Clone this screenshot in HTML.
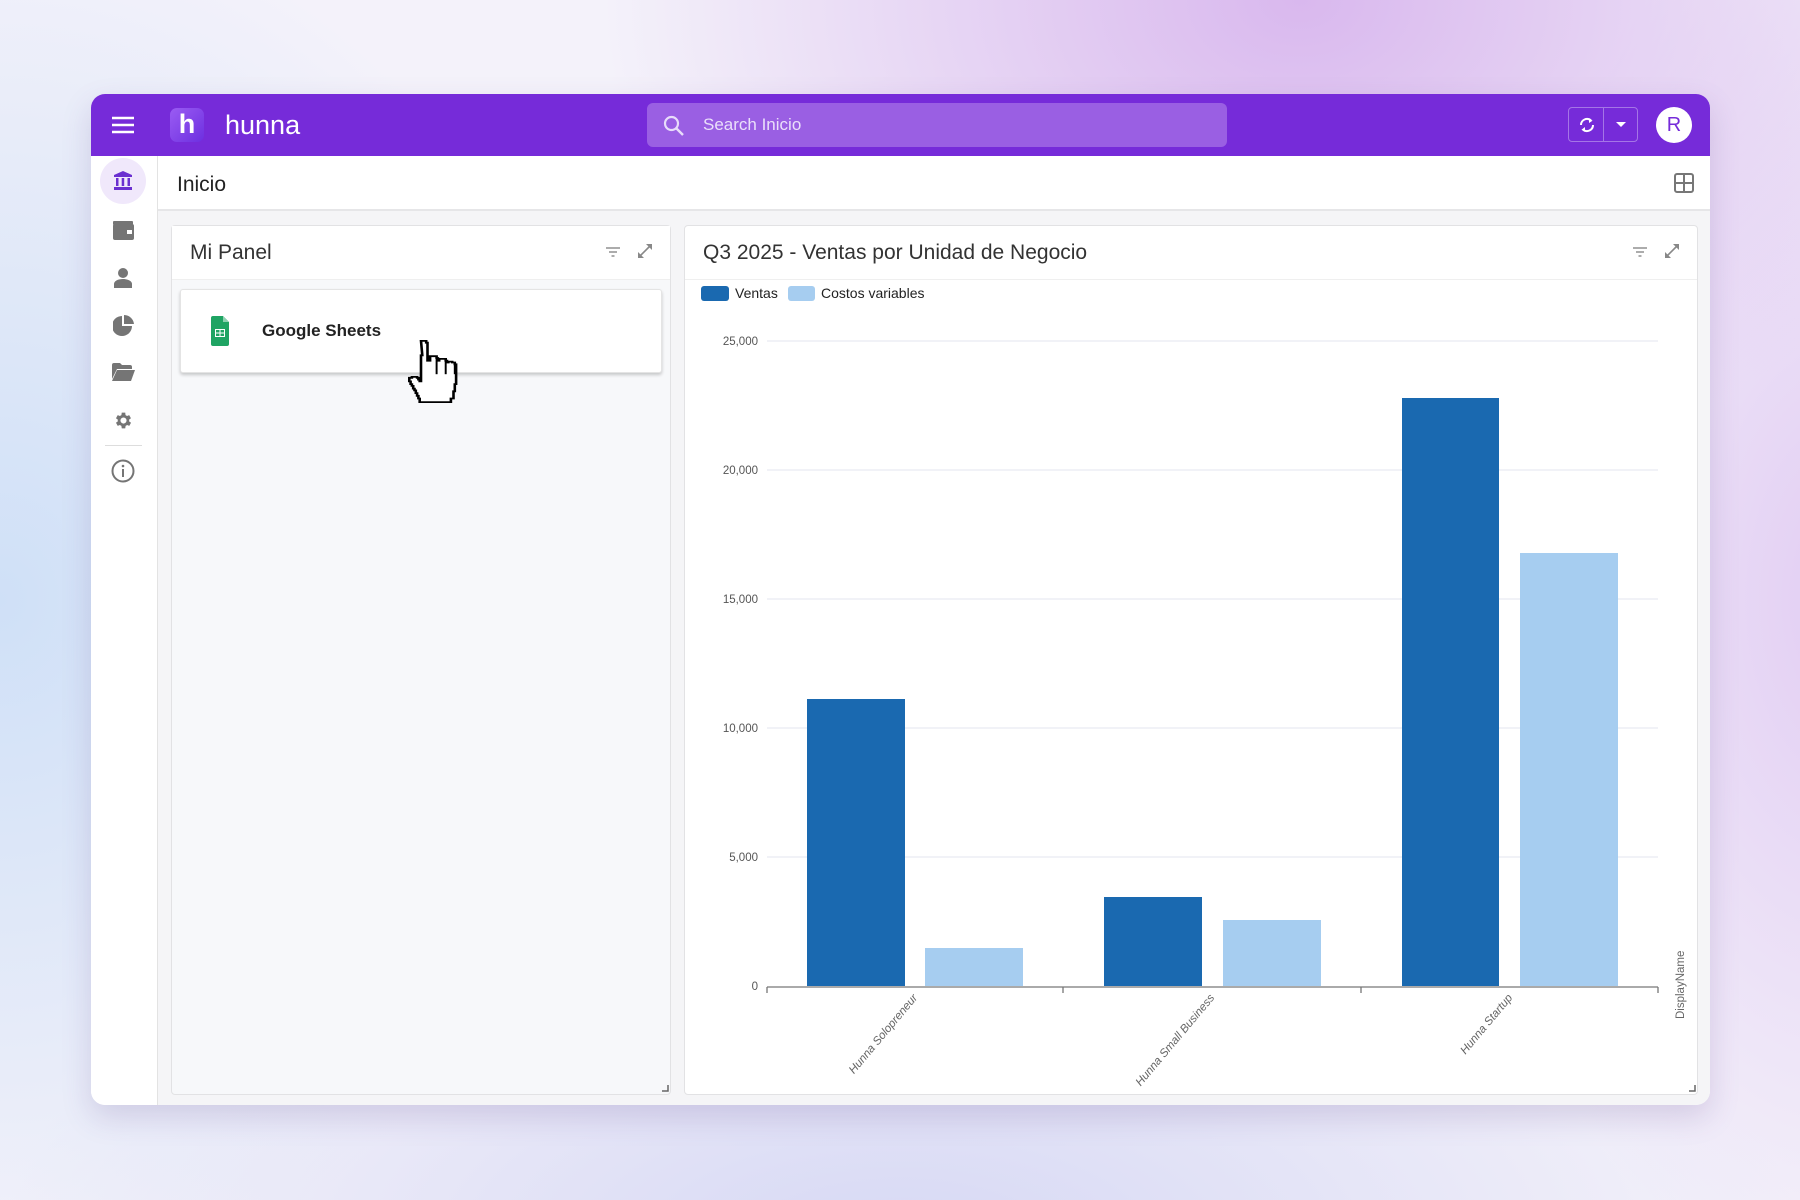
<!DOCTYPE html>
<html><head><meta charset="utf-8"><style>
*{margin:0;padding:0;box-sizing:border-box}
body{width:1800px;height:1200px;overflow:hidden;font-family:"Liberation Sans",Arial,sans-serif;
background:radial-gradient(ellipse 700px 500px at 1300px 0px,#d9b8ee 0%,rgba(217,184,238,0) 100%),
radial-gradient(ellipse 600px 700px at 0px 600px,#cfe0f7 0%,rgba(207,224,247,0) 100%),
radial-gradient(ellipse 900px 400px at 900px 1250px,#d6d8f4 0%,rgba(214,216,244,0) 100%),
radial-gradient(ellipse 400px 700px at 1850px 600px,#e2cdf3 0%,rgba(226,205,243,0) 100%),#f4f2fa;position:relative}
.win{position:absolute;left:91px;top:94px;width:1619px;height:1011px;background:#fff;border-radius:14px;overflow:hidden;box-shadow:0 12px 30px rgba(90,60,140,.18)}
.hdr{position:absolute;left:0;top:0;width:100%;height:62px;background:#762bd9}
.abs{position:absolute}
.side{position:absolute;left:0;top:62px;width:67px;bottom:0;border-right:1px solid #e3e3e3;background:#fff}
.topbar{position:absolute;left:67px;top:62px;right:0;height:55px;border-bottom:2px solid #e6e6e8;background:#fff}
.content{position:absolute;left:67px;top:117px;right:0;bottom:0;background:#f5f5f7}
.panel{position:absolute;background:#fff;border:1px solid #e2e2e4;border-radius:4px}
.ph{position:absolute;left:0;top:0;right:0;height:54px;border-bottom:1px solid #efefef}
</style></head><body>
<div class="win">
 <div class="hdr">
  <svg class="abs" style="left:21px;top:22px" width="22" height="18"><g stroke="#fff" stroke-width="2.4"><line x1="0" y1="2" x2="22" y2="2"/><line x1="0" y1="9" x2="22" y2="9"/><line x1="0" y1="16" x2="22" y2="16"/></g></svg>
  <div class="abs" style="left:79px;top:14px;width:34px;height:34px;border-radius:7px;background:linear-gradient(135deg,#9a5cf3,#6d2fe0);color:#fff;font-weight:bold;font-size:27px;text-align:center;line-height:33px">h</div>
  <div class="abs" style="left:134px;top:14px;color:#fff;font-size:27px;line-height:34px">hunna</div>
  <div class="abs" style="left:556px;top:9px;width:580px;height:44px;border-radius:6px;background:#9a5fe3">
   <svg class="abs" style="left:16px;top:12px" width="22" height="22"><circle cx="8.5" cy="8.5" r="6.5" fill="none" stroke="#e8dcfa" stroke-width="2.2"/><line x1="13.5" y1="13.5" x2="20" y2="20" stroke="#e8dcfa" stroke-width="2.4"/></svg>
   <div class="abs" style="left:56px;top:12px;color:#eadffa;font-size:17px">Search Inicio</div>
  </div>
  <div class="abs" style="left:1477px;top:13px;width:70px;height:35px;border:1px solid rgba(255,255,255,.35);border-radius:4px">
   <div class="abs" style="left:34px;top:0;width:1px;height:33px;background:rgba(255,255,255,.35)"></div>
   <svg class="abs" style="left:8px;top:7px" width="20" height="20" viewBox="0 0 20 20"><path d="M4 10a6 6 0 0 1 10-4.5M16 10a6 6 0 0 1-10 4.5" fill="none" stroke="#fff" stroke-width="2"/><path d="M12 3l3.5 2.8L12 8z M8 12l-3.5 2.8L8 17z" fill="#fff"/></svg>
   <svg class="abs" style="left:47px;top:14px" width="10" height="6"><path d="M0 0h10L5 5z" fill="#fff"/></svg>
  </div>
  <div class="abs" style="left:1565px;top:13px;width:36px;height:36px;border-radius:50%;background:#fff;color:#762bd9;font-size:20px;text-align:center;line-height:36px">R</div>
 </div>
 <div class="side">
  <div class="abs" style="left:9px;top:2px;width:46px;height:46px;border-radius:50%;background:#f0e8fb"></div>
  <svg class="abs" style="left:22px;top:15px" width="20" height="20" viewBox="0 0 20 20" fill="#6a2fd0"><path d="M10 0L19 4v2H1V4z"/><rect x="3" y="7" width="2.5" height="8"/><rect x="8.7" y="7" width="2.5" height="8"/><rect x="14.5" y="7" width="2.5" height="8"/><rect x="1" y="16" width="18" height="3"/></svg>
  <svg class="abs" style="left:22px;top:65px" width="21" height="19" viewBox="0 0 21 19"><rect x="0" y="0" width="20" height="4" rx="1" fill="#757575"/><rect x="0" y="3" width="21" height="16" rx="2" fill="#757575"/><rect x="14" y="9" width="5" height="4" fill="#fff"/></svg>
  <svg class="abs" style="left:23px;top:112px" width="18" height="20" viewBox="0 0 18 20" fill="#757575"><circle cx="9" cy="5" r="5"/><path d="M0 20v-4c0-3 4-5 9-5s9 2 9 5v4z"/></svg>
  <svg class="abs" style="left:22px;top:159px" width="21" height="21" viewBox="0 0 21 21" fill="#757575"><path d="M9 1v10h10A10 10 0 1 1 9 1z"/><path d="M11 0a10 10 0 0 1 10 9H11z"/></svg>
  <svg class="abs" style="left:21px;top:207px" width="23" height="18" viewBox="0 0 23 18" fill="#757575"><path d="M0 2a2 2 0 0 1 2-2h6l2 2h8a2 2 0 0 1 2 2v2H5L0 16z"/><path d="M5 7h18l-4 11H0z"/></svg>
  <svg class="abs" style="left:22px;top:254px" width="21" height="21" viewBox="0 0 24 24" fill="#757575"><path d="M19.4 13a7.5 7.5 0 0 0 0-2l2.1-1.6-2-3.5-2.5 1a7.6 7.6 0 0 0-1.7-1L15 3h-4l-.4 2.9a7.6 7.6 0 0 0-1.7 1l-2.5-1-2 3.5L6.5 11a7.5 7.5 0 0 0 0 2l-2.1 1.6 2 3.5 2.5-1a7.6 7.6 0 0 0 1.7 1L11 21h4l.4-2.9a7.6 7.6 0 0 0 1.7-1l2.5 1 2-3.5zM13 15.5a3.5 3.5 0 1 1 0-7 3.5 3.5 0 0 1 0 7z" transform="translate(-1 0)"/></svg>
  <div class="abs" style="left:14px;top:289px;width:37px;height:1px;background:#ddd"></div>
  <svg class="abs" style="left:20px;top:303px" width="24" height="24" viewBox="0 0 24 24"><circle cx="12" cy="12" r="10.5" fill="none" stroke="#757575" stroke-width="2"/><rect x="11" y="10" width="2" height="8" fill="#757575"/><circle cx="12" cy="7" r="1.3" fill="#757575"/></svg>
 </div>
 <div class="topbar">
  <div class="abs" style="left:19px;top:17px;font-size:21px;color:#222">Inicio</div>
  <svg class="abs" style="left:1516px;top:17px" width="20" height="20"><rect x="1" y="1" width="18" height="18" rx="2" fill="none" stroke="#777" stroke-width="2"/><line x1="10" y1="1" x2="10" y2="19" stroke="#777" stroke-width="2"/><line x1="1" y1="10" x2="19" y2="10" stroke="#777" stroke-width="2"/></svg>
 </div>
 <div class="content"></div>
 <div class="panel" style="left:80px;top:131px;width:500px;height:870px;background:#f7f8fa">
  <div class="ph" style="background:#fff"></div>
  <div class="abs" style="left:18px;top:15px;font-size:21px;color:#333">Mi Panel</div>
  <svg class="abs" style="left:434px;top:20px" width="14" height="12"><g stroke="#888" stroke-width="1.4"><line x1="0" y1="2" x2="14" y2="2"/><line x1="3" y1="6" x2="11" y2="6"/><line x1="5.5" y1="10" x2="8.5" y2="10"/></g></svg>
  <svg class="abs" style="left:465px;top:17px" width="16" height="16"><g stroke="#888" stroke-width="1.6" fill="#888"><line x1="2" y1="14" x2="14" y2="2"/><path d="M9 1h6v6z" stroke="none"/><path d="M1 9v6h6z" stroke="none"/></g></svg>
  <div class="abs" style="left:8px;top:63px;width:482px;height:84px;background:#fff;border:1px solid #e4e4e4;border-radius:3px;box-shadow:0 2px 3px rgba(0,0,0,.2)">
   <svg class="abs" style="left:30px;top:26px" width="18" height="30" viewBox="0 0 18 30"><path d="M2 0h10l6 6v22a2 2 0 0 1-2 2H2a2 2 0 0 1-2-2V2a2 2 0 0 1 2-2z" fill="#1fa463"/><path d="M12 0v6h6z" fill="#8ed1b1"/><rect x="4" y="13" width="10" height="8" fill="#fff"/><g fill="#1fa463"><rect x="5" y="14" width="3.5" height="2.5"/><rect x="9.5" y="14" width="3.5" height="2.5"/><rect x="5" y="17.5" width="3.5" height="2.5"/><rect x="9.5" y="17.5" width="3.5" height="2.5"/></g></svg>
   <div class="abs" style="left:81px;top:31px;font-size:17px;font-weight:bold;color:#222">Google Sheets</div>
  </div>
  <svg class="abs" style="left:490px;top:859px" width="7" height="7"><path d="M6 0v6H0" fill="none" stroke="#666" stroke-width="1.5"/></svg>
 </div>
 <div class="panel" style="left:593px;top:131px;width:1014px;height:870px">
  <div class="ph"></div>
  <div class="abs" style="left:18px;top:15px;font-size:21px;color:#333">Q3 2025 - Ventas por Unidad de Negocio</div>
  <svg class="abs" style="left:948px;top:20px" width="14" height="12"><g stroke="#888" stroke-width="1.4"><line x1="0" y1="2" x2="14" y2="2"/><line x1="3" y1="6" x2="11" y2="6"/><line x1="5.5" y1="10" x2="8.5" y2="10"/></g></svg>
  <svg class="abs" style="left:979px;top:17px" width="16" height="16"><g stroke="#888" stroke-width="1.6" fill="#888"><line x1="2" y1="14" x2="14" y2="2"/><path d="M9 1h6v6z" stroke="none"/><path d="M1 9v6h6z" stroke="none"/></g></svg>
  <svg class="abs" style="left:1004px;top:859px" width="7" height="7"><path d="M6 0v6H0" fill="none" stroke="#666" stroke-width="1.5"/></svg>
 </div>
</div>
<svg class="abs" style="left:0;top:0" width="1800" height="1200">
 <g font-family="Liberation Sans,Arial,sans-serif" font-size="14" fill="#222">
  <rect x="701" y="286" width="28" height="15" rx="3" fill="#1a69b0"/><text x="735" y="298">Ventas</text>
  <rect x="788" y="286" width="27" height="15" rx="3" fill="#a6cdf0"/><text x="821" y="298">Costos variables</text>
 </g>
 <g stroke="#e3e6ef" stroke-width="1">
  <line x1="767" y1="341" x2="1658" y2="341"/><line x1="767" y1="470" x2="1658" y2="470"/><line x1="767" y1="599" x2="1658" y2="599"/><line x1="767" y1="728" x2="1658" y2="728"/><line x1="767" y1="857" x2="1658" y2="857"/>
 </g>
 <g font-family="Liberation Sans,Arial,sans-serif" font-size="11.5" fill="#555" text-anchor="end">
  <text x="758" y="345">25,000</text><text x="758" y="474">20,000</text><text x="758" y="603">15,000</text><text x="758" y="732">10,000</text><text x="758" y="861">5,000</text><text x="758" y="990">0</text>
 </g>
 <g fill="#1a69b0"><rect x="807" y="699" width="98" height="287"/><rect x="1104" y="897" width="98" height="89"/><rect x="1402" y="398" width="97" height="588"/></g>
 <g fill="#a6cdf0"><rect x="925" y="948" width="98" height="38"/><rect x="1223" y="920" width="98" height="66"/><rect x="1520" y="553" width="98" height="433"/></g>
 <g stroke="#777" stroke-width="1.3" fill="none"><line x1="767" y1="987" x2="1658" y2="987"/><line x1="767" y1="987" x2="767" y2="993"/><line x1="1063" y1="987" x2="1063" y2="993"/><line x1="1361" y1="987" x2="1361" y2="993"/><line x1="1658" y1="987" x2="1658" y2="993"/></g>
 <g font-family="Liberation Sans,Arial,sans-serif" font-size="11.5" fill="#666" font-style="italic" text-anchor="end">
  <text transform="translate(918,998) rotate(-50)">Hunna Solopreneur</text>
  <text transform="translate(1215,998) rotate(-50)">Hunna Small Business</text>
  <text transform="translate(1513,998) rotate(-50)">Hunna Startup</text>
  <text transform="translate(1684,1019) rotate(-90)" text-anchor="start" font-style="normal">DisplayName</text>
 </g>
 <g transform="translate(408,340) scale(1.3,0.9) translate(-411,-340)">
 <path d="M421 341h4v2h1v20h2v-5h5v2h1v3h1v-2h5v2h1v2h1v-1h3v1h2v2h1v22h-1v8h-1v8h-2v4h-24v-4h-1v-3h-1v-3h-1v-3h-1v-2h-1v-3h-1v-2h-1v-3h-1v-4h2v-1h4v1h1v2h1v2h1v-29h1z" fill="#fff" stroke="#000" stroke-width="2"/>
 <g stroke="#000" stroke-width="1.5"><line x1="433" y1="360" x2="433" y2="378"/><line x1="440" y1="362" x2="440" y2="378"/><line x1="447" y1="366" x2="447" y2="378"/></g>
 </g>
</svg>
</body></html>
